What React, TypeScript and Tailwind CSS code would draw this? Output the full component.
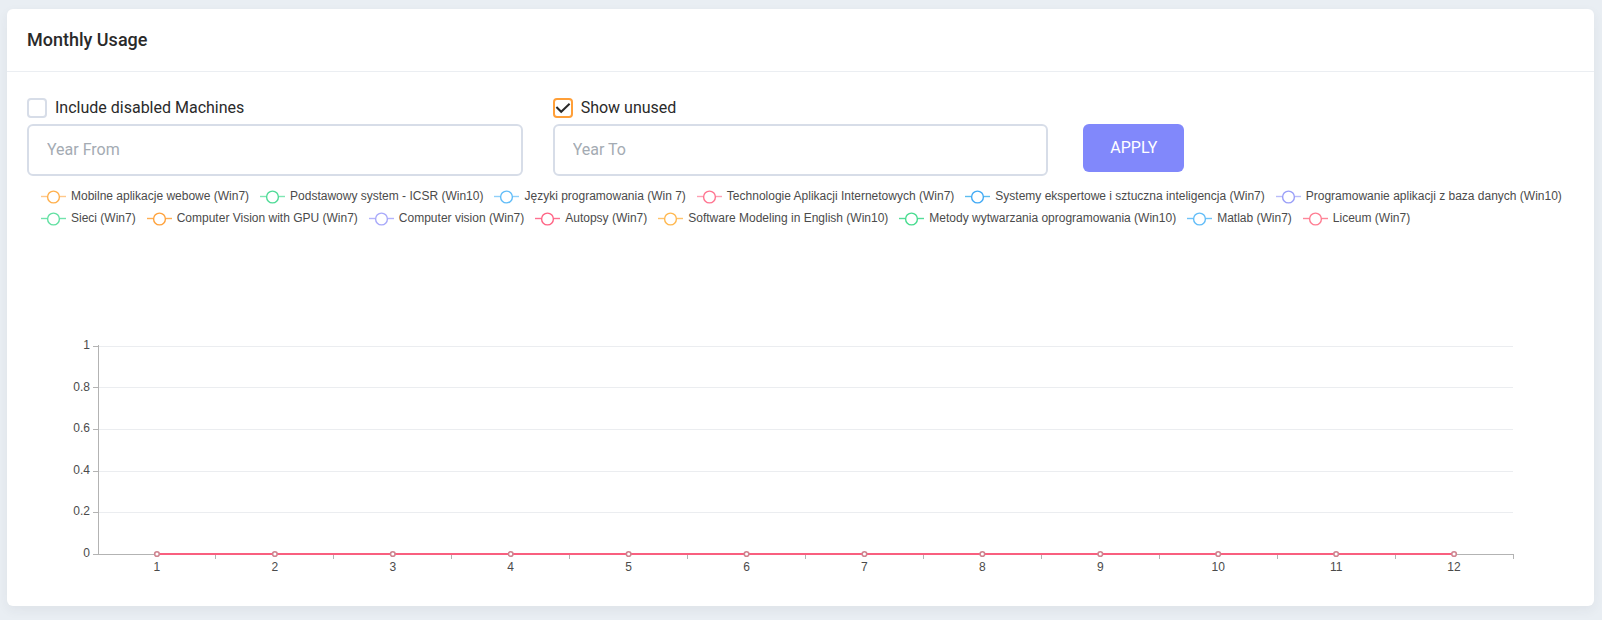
import { useState } from "react";

type Series = { name: string; ring: string; line: string };

const ORANGE = { ring: "#ffb04d", line: "#ffc88a" };
const GREEN = { ring: "#4fdb97", line: "#7fe6b3" };
const BLUE = { ring: "#62bdf8", line: "#8fd0fa" };
const PINK = { ring: "#ff7490", line: "#ffa0b3" };
const PURPLE = { ring: "#9a9ff8", line: "#b9bcfa" };

const series: Series[] = [
  { name: "Mobilne aplikacje webowe (Win7)", ...ORANGE },
  { name: "Podstawowy system - ICSR (Win10)", ...GREEN },
  { name: "Języki programowania (Win 7)", ...BLUE },
  { name: "Technologie Aplikacji Internetowych (Win7)", ...PINK },
  { name: "Systemy ekspertowe i sztuczna inteligencja (Win7)", ring: "#42aaf5", line: "#5cbdf0" },
  { name: "Programowanie aplikacji z baza danych (Win10)", ...PURPLE },
  { name: "Sieci (Win7)", ring: "#62e0a2", line: "#72e3ac" },
  { name: "Computer Vision with GPU (Win7)", ring: "#ffa23c", line: "#ffae52" },
  { name: "Computer vision (Win7)", ring: "#a8a9fa", line: "#b4b4fb" },
  { name: "Autopsy (Win7)", ring: "#ff6384", line: "#ff7090" },
  { name: "Software Modeling in English (Win10)", ring: "#ffb84f", line: "#ffc36b" },
  { name: "Metody wytwarzania oprogramowania (Win10)", ring: "#47dc8f", line: "#55dd99" },
  { name: "Matlab (Win7)", ring: "#62bdf8", line: "#6fc3f8" },
  { name: "Liceum (Win7)", ring: "#ff7d92", line: "#ff8799" },
];

const ticks = [
  { label: "1", y: 0, baseline: 3 },
  { label: "0.8", y: 41, baseline: 45 },
  { label: "0.6", y: 83, baseline: 86 },
  { label: "0.4", y: 125, baseline: 128 },
  { label: "0.2", y: 166, baseline: 169 },
  { label: "0", y: 208, baseline: 211 },
];

const months = [1, 2, 3, 4, 5, 6, 7, 8, 9, 10, 11, 12];

function Checkbox({ label, initial }: { label: string; initial: boolean }) {
  const [checked, setChecked] = useState(initial);
  return (
    <label className="flex h-5 w-fit items-center gap-2 text-base text-[#2a2a2a]">
      <span className="grid size-5">
        <input
          type="checkbox"
          checked={checked}
          onChange={(e) => setChecked(e.target.checked)}
          className="col-start-1 row-start-1 size-5 appearance-none rounded border-2 border-[#d7dde8] bg-white checked:border-[#ff9f38]"
        />
        {checked && (
          <svg viewBox="0 0 20 20" className="pointer-events-none col-start-1 row-start-1 size-5" aria-hidden="true">
            <path d="M3.4 9 8.2 13.8 16.6 5.8" fill="none" stroke="#2a2a2a" strokeWidth="2" />
          </svg>
        )}
      </span>
      {label}
    </label>
  );
}

function Field({ label }: { label: string }) {
  return (
    <input
      type="text"
      aria-label={label}
      placeholder={label}
      className="h-13 w-full rounded-md border-2 border-[#d7dde8] bg-white px-4.5 pb-0.5 text-base text-[#2a2a2a] outline-none placeholder:text-[#a4abb3]"
    />
  );
}

function Legend() {
  return (
    <ul className="flex flex-wrap gap-x-[11px] gap-y-2 pl-3.5 font-['Liberation_Sans',Arial,sans-serif] text-xs leading-[14px] text-[#4b4b4b]">
      {series.map((s) => (
        <li key={s.name}>
          <button type="button" className="flex items-center gap-[5px] whitespace-nowrap">
            <svg width="25" height="14" viewBox="0 0 25 14" className="overflow-visible" aria-hidden="true">
              <path d="M0 7.5H25" stroke={s.line} strokeWidth="1.4" />
              <circle cx="12.5" cy="8" r="5.9" fill="#fff" stroke={s.ring} strokeWidth="1.4" />
            </svg>
            {s.name}
          </button>
        </li>
      ))}
    </ul>
  );
}

function Chart() {
  return (
    <div className="pr-[61px] pl-[71px] font-['Liberation_Sans',Arial,sans-serif]">
      <svg className="block h-[209px] w-full overflow-visible text-xs" role="img" aria-label="Monthly usage">
        {ticks.map((t) => (
          <g key={t.label}>
            <rect x="0" y={t.y} width="100%" height="1" fill={t.y === 208 ? "#b3b3b3" : "#ebedf0"} />
            <rect x="-5" y={t.y} width="5" height="1" fill="#b3b3b3" />
            <text x="-8" y={t.baseline} textAnchor="end" fill="#4b4b4b">
              {t.label}
            </text>
          </g>
        ))}
        <rect x="0" y="-1" width="1" height="210" fill="#b3b3b3" />
        {months.map((m) => (
          <g key={m}>
            <line x1={`${(m / 12) * 100}%`} x2={`${(m / 12) * 100}%`} y1="208" y2="213" stroke="#b3b3b3" shapeRendering="crispEdges" />
            <text x={`${((m - 0.5) / 12) * 100}%`} y="225" textAnchor="middle" fill="#4b4b4b">
              {m}
            </text>
          </g>
        ))}
        <line x1={`${50 / 12}%`} x2={`${1150 / 12}%`} y1="208" y2="208" stroke="#f95f7f" strokeWidth="2" />
        {months.map((m) => (
          <circle key={m} cx={`${((m - 0.5) / 12) * 100}%`} cy="208" r="2.3" fill="#fff" stroke="#cf8490" strokeWidth="1.6" />
        ))}
      </svg>
    </div>
  );
}

export default function App() {
  return (
    <div className="min-h-screen bg-[#e9eef3] pt-[9px] pr-2 pb-3.5 pl-[7px] font-[Roboto,sans-serif]">
      <main className="rounded-md bg-white shadow-[0_4px_12px_0_rgba(44,51,73,0.06)]">
        <header className="flex h-[63px] items-center border-b border-[#ebeef2] px-5">
          <h1 className="text-lg font-medium text-[#2a2a2a]">Monthly Usage</h1>
        </header>
        <div className="px-5 pt-6.5 pb-[51px]">
          <form className="grid grid-cols-3 items-end gap-x-7.5" onSubmit={(e) => e.preventDefault()}>
            <div className="flex flex-col gap-1.5">
              <Checkbox label="Include disabled Machines" initial={false} />
              <Field label="Year From" />
            </div>
            <div className="flex flex-col gap-1.5">
              <Checkbox label="Show unused" initial={true} />
              <Field label="Year To" />
            </div>
            <div className="pb-1 pl-[5px]">
              <button type="submit" className="block h-12 rounded-md bg-[#8188fb] px-[27px] text-base text-white">
                APPLY
              </button>
            </div>
          </form>
          <div className="pt-[13px]">
            <Legend />
          </div>
          <div className="pt-[121px]">
            <Chart />
          </div>
        </div>
      </main>
    </div>
  );
}
